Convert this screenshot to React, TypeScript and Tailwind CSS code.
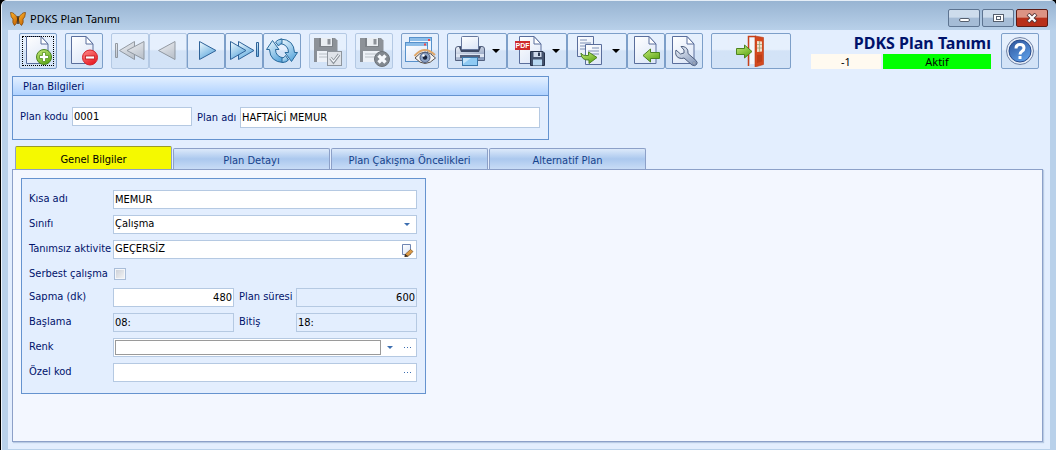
import { useState } from 'react'
import type { ComponentProps, ReactNode } from 'react'
import clsx from 'clsx'

const TABS = ['Genel Bilgiler', 'Plan Detayı', 'Plan Çakışma Öncelikleri', 'Alternatif Plan']

function Svg({ children }: { children: ReactNode }) {
  return (
    <svg viewBox="0 0 32 32" className="h-8 w-8 shrink-0" aria-hidden="true">
      {children}
    </svg>
  )
}

// Shared gradients, referenced by id from all icons
function Gradients() {
  const list = [
    ['gBlue', '#f2fbff', '#5fa9dd'],
    ['gGray', '#f0f1f3', '#b9bdc3'],
    ['gPaper', '#ffffff', '#dfe8f8'],
    ['gGreen', '#c9ec7c', '#5fa818'],
    ['gRed', '#ff8d8d', '#e81c24'],
    ['gHelp', '#2c5298', '#5b9be4'],
    ['gSteel', '#f2f6fc', '#8b9dbd'],
    ['gOrange', '#ffb52b', '#c96a08'],
  ]
  return (
    <svg className="absolute h-0 w-0" aria-hidden="true">
      <defs>
        {list.map(([id, from, to]) => (
          <linearGradient key={id} id={id} x1="0" y1="0" x2="0.6" y2="1">
            <stop offset="0" stopColor={from} />
            <stop offset="1" stopColor={to} />
          </linearGradient>
        ))}
      </defs>
    </svg>
  )
}

function Page({ x = 4 }: { x?: number }) {
  return (
    <g transform={`translate(${x} 1)`} stroke="#5a6e9c" strokeLinejoin="round">
      <path d="M.5 .5H15L22 8V27.5H.5Z" fill="url(#gPaper)" />
      <path d="M15 .5V8H22Z" fill="#fff" />
    </g>
  )
}

function Floppy({ body, shade }: { body: string; shade: string }) {
  return (
    <g>
      <path d="M2 3H23L25.500 5.500V27H2Z" fill={body} />
      <path d="M7 3H21V12H7Z" fill={shade} />
      <path d="M9 3H20V11H9Z" fill="#eceef0" />
      <path d="M15.500 4H18.500V9.500H15.500Z" fill={body} />
      <path d="M5 16H22V27H5Z" fill="#f4f5f7" />
      <path d="M7 19H20M7 22H20" stroke="#b4b8bd" />
    </g>
  )
}

const NewIcon = () => (
  <Svg>
    <Page />
    <circle cx="22" cy="22" r="7.500" fill="url(#gGreen)" stroke="#4c8420" />
    <path d="M20.500 17.500h3v3h3v3h-3v3h-3v-3h-3v-3h3z" fill="#fff" stroke="#55901f" strokeWidth=".8" />
  </Svg>
)

const DeleteIcon = () => (
  <Svg>
    <Page x={3} />
    <circle cx="22" cy="22.500" r="7.500" fill="url(#gRed)" stroke="#d3222a" />
    <rect x="17.500" y="21" width="9" height="3" fill="#fff" stroke="#b8181e" strokeWidth=".8" />
  </Svg>
)

const FirstIcon = () => (
  <Svg>
    <g fill="url(#gGray)" stroke="#7f858c" strokeLinejoin="round">
      <rect x="1.500" y="8.500" width="2" height="14" />
      <path d="M20.500 6.500V24.500L5.500 15.500Z" />
      <path d="M30 6.500V24.500L13 15.500Z" />
    </g>
  </Svg>
)

const PrevIcon = () => (
  <Svg>
    <path d="M23 6.500V24.500L6.500 15.500Z" fill="url(#gGray)" stroke="#7f858c" strokeLinejoin="round" />
  </Svg>
)

const NextIcon = () => (
  <Svg>
    <path d="M9.500 6.500V24.500L26 15.500Z" fill="url(#gBlue)" stroke="#2f6399" strokeLinejoin="round" />
  </Svg>
)

const LastIcon = () => (
  <Svg>
    <g fill="url(#gBlue)" stroke="#2f6399" strokeLinejoin="round">
      <path d="M10.500 6.500V24.500L26 15.500Z" />
      <path d="M2.500 6.500V24.500L18 15.500Z" />
      <rect x="28.500" y="7.500" width="2" height="14" />
    </g>
  </Svg>
)

// Two half-ring arrows: the left one points up, the right one down
const RefreshIcon = () => (
  <Svg>
    <g fill="url(#gBlue)" stroke="#2a6a9c" strokeLinejoin="round">
      <path d="M6.500 5.500L13 14.500H9.500Q9.500 21.500 17.500 23V27.500Q4 27 3.500 14.500H.5Z" />
      <path d="M25.500 26.500L19 17.500H22.500Q22.500 10 14.500 8.500V4Q28 4.500 28.500 17.500H31.500Z" />
      <path d="M9.500 7Q11.500 4.500 16 4V8.500Q13.500 9 12.500 11Z" />
      <path d="M22.500 25Q20.500 27.500 16 27.500V23Q18.500 23 19.500 20.500Z" />
    </g>
  </Svg>
)

const SaveIcon = () => (
  <Svg>
    <Floppy body="#777b80" shade="#62666a" />
    <rect x="15.500" y="16.500" width="14" height="14" fill="#e2e4e6" stroke="#7d8287" />
    <path d="M18.500 23L21.500 27L27 19.500" fill="none" stroke="#7c8085" strokeWidth="3" />
    <path d="M18.500 23L21.500 26.500L27 19.500" fill="none" stroke="#fff" strokeWidth="1.200" />
  </Svg>
)

const CancelIcon = () => (
  <Svg>
    <Floppy body="#777b80" shade="#62666a" />
    <circle cx="24" cy="24" r="7.500" fill="#6f7377" stroke="#54585c" />
    <path d="M20.500 20.500L27.500 27.500M27.500 20.500L20.500 27.500" stroke="#fff" strokeWidth="3.400" />
  </Svg>
)

const PreviewIcon = () => (
  <Svg>
    <rect x="5.500" y="2.500" width="22" height="18" fill="#edf5ff" stroke="#5791cb" />
    <path d="M6 3H27V6H6Z" fill="#8dbde8" />
    <rect x="24" y="4" width="2" height="2" fill="#f0484a" />
    <rect x="1.500" y="7.500" width="22" height="19" fill="url(#gPaper)" stroke="#5791cb" />
    <path d="M2 8H23V11H2Z" fill="#8dbde8" />
    <rect x="20" y="8.500" width="2" height="2" fill="#f0484a" />
    <path d="M11 23Q21 11 31.500 23Q21 34 11 23Z" fill="#f4f4f4" stroke="#57504c" />
    <path d="M10.500 21Q20 9.500 31 20" fill="none" stroke="#dfa668" strokeWidth="2" />
    <circle cx="21" cy="22.500" r="5" fill="#8ea4c6" stroke="#4a5b80" />
    <circle cx="21" cy="22.500" r="2.200" fill="#18233c" />
    <circle cx="19.500" cy="20.500" r="1.200" fill="#fff" />
  </Svg>
)

const PrintIcon = () => (
  <Svg>
    <path d="M1.500 14Q1.500 11.500 4 11.500H28Q30.500 11.500 30.500 14V25.500H1.500Z" fill="url(#gSteel)" stroke="#53617f" />
    <path d="M5 12H27L25 17H7Z" fill="#3e4a66" />
    <rect x="7.500" y="1.500" width="17" height="13" rx="1" fill="url(#gPaper)" stroke="#66779d" />
    <path d="M2 19H30V22H2Z" fill="#dde5f2" />
    <rect x="6" y="20" width="20" height="3" fill="#56627d" />
    <rect x="8.500" y="22.500" width="15" height="8" fill="#8fcaf3" stroke="#3b78ab" />
    <path d="M9 23H17L9 29Z" fill="#c5e5fb" />
  </Svg>
)

const PdfIcon = () => (
  <Svg>
    <Page x={5} />
    <rect x="1" y="6" width="15" height="9" fill="#cf2a2c" />
    <text x="8.500" y="13.200" textAnchor="middle" fontSize="7" fontWeight="700" fill="#fff" fontFamily="Liberation Sans, sans-serif">
      PDF
    </text>
    <path d="M16.500 16.500H29L30.500 18V30.500H16.500Z" fill="#44536e" stroke="#26324a" />
    <rect x="19.500" y="17" width="8" height="5" fill="#cfdaea" />
    <rect x="24" y="17.500" width="2" height="3.500" fill="#2e3b54" />
    <rect x="19" y="24.500" width="9" height="6" fill="#b8d9f2" />
  </Svg>
)

const TransferIcon = () => (
  <Svg>
    <g fill="url(#gPaper)" stroke="#5a6e9c">
      <path d="M3.500 1.500H19.500V21.500H3.500Z" />
      <path d="M6 5H13M6 8H17M6 11H17M6 14H17" stroke="#7f90b4" />
      <path d="M11.500 9.500H27.500V29.500H11.500Z" />
      <path d="M18 13H25M14 16H25M14 19H25" stroke="#7f90b4" />
    </g>
    <path
      d="M7 18Q8 21 14.500 20.500V17L23 22.500L15 28.500V25Q7 25.500 7 18Z"
      fill="url(#gGreen)"
      stroke="#4c8420"
      strokeLinejoin="round"
    />
  </Svg>
)

const ImportIcon = () => (
  <Svg>
    <Page />
    <path d="M13 20.500L20.500 14V17.500H29.500V23.500H20.500V27Z" fill="url(#gGreen)" stroke="#4c8420" strokeLinejoin="round" />
  </Svg>
)

const SettingsIcon = () => (
  <Svg>
    <Page />
    <path
      d="M8 15Q6.500 21 11 23Q14 24 16 23L24 30Q27 31.500 28.500 29.500Q30 27.500 28 25.500L20 18.500Q20.500 12.500 15 11.500L13 11.500L16 15V18L12.500 19Z"
      fill="url(#gSteel)"
      stroke="#4f5f7e"
      strokeLinejoin="round"
    />
    <circle cx="26" cy="28" r="1" fill="#fff" stroke="#4f5f7e" strokeWidth=".6" />
  </Svg>
)

const ExitIcon = () => (
  <Svg>
    <path d="M13.500 31V1.500H21" fill="none" stroke="#c8401a" strokeWidth="1.500" />
    <path d="M15 3H21V29H15Z" fill="#f3f7fc" />
    <path d="M20 1L28.500 2.500V29.500L20 32Z" fill="#d4491f" stroke="#b93a15" strokeWidth=".6" />
    <path d="M22 6L27 6.500V16.500L22 17Z" fill="#f3ddc9" />
    <path d="M24.500 6V17M22 9.500H27M22 13H27" stroke="#9aa578" strokeWidth=".8" />
    <path d="M22 20L27 19.500V26.500L22 28Z" fill="#bf3e18" />
    <path d="M1.500 13.500H9.500V10L17 16.500L9.500 23V19.500H1.500Z" fill="url(#gGreen)" stroke="#4c8420" strokeLinejoin="round" />
  </Svg>
)

const HelpIcon = () => (
  <Svg>
    <circle cx="16" cy="16" r="13.500" fill="#e6edf7" stroke="#7083a6" />
    <circle cx="16" cy="16" r="11" fill="url(#gHelp)" stroke="#274a8c" />
    <path d="M12 13.500Q12 9.500 16 9.500T20 13Q20 15 18 16.200T16 19.500" fill="none" stroke="#fff" strokeWidth="3" />
    <rect x="14.500" y="21" width="3" height="3" fill="#fff" />
  </Svg>
)

const Butterfly = () => (
  <svg viewBox="0 0 16 16" className="mt-1.5 h-4 w-4" aria-hidden="true">
    <g fill="url(#gOrange)" stroke="#7c4307" strokeWidth=".7">
      <path d="M7.500 7Q4 1 .5 1.500Q.8 7 3 8Q2 12 4.500 14.500Q7 13 7.500 9Z" />
      <path d="M8.500 7Q12 1 15.500 1.500Q15.200 7 13 8Q14 12 11.500 14.500Q9 13 8.500 9Z" />
    </g>
    <path d="M8 5V13" stroke="#3c2408" strokeWidth="1.400" />
  </svg>
)

const Caret = ({ className }: { className?: string }) => (
  <svg viewBox="0 0 8 4" className={clsx('shrink-0', className)} aria-hidden="true">
    <path d="M0 0H8L4 4Z" fill="currentColor" />
  </svg>
)

interface ToolButtonProps {
  label: string
  icon: ReactNode
  menu?: boolean
  wide?: boolean
  focused?: boolean
  disabled?: boolean
}

function ToolButton({ label, icon, menu, wide, focused, disabled }: ToolButtonProps) {
  return (
    <button
      type="button"
      aria-label={label}
      disabled={disabled}
      className={clsx(
        'relative flex h-9 shrink-0 items-center rounded-xs border bg-linear-to-b from-[#e6f0fd] from-45% to-[#d3e3f7] to-50%',
        menu ? 'w-15 justify-between pr-1.5 pl-1.5' : 'justify-center',
        !menu && (wide ? 'w-20' : 'w-9.5'),
        disabled ? 'border-[#b4c9e4] text-gray-400' : 'border-[#7d9fc9] text-black',
      )}
    >
      <span className={clsx('flex', disabled && 'opacity-80')}>{icon}</span>
      {menu && <Caret className="h-1 w-2" />}
      {focused && <span className="absolute inset-0.5 border border-dotted border-black" />}
    </button>
  )
}

function Toolbar() {
  return (
    <div className="flex h-11.5 items-start gap-2 pt-0.75 pr-2.75 pl-2.75">
      <ToolButton label="Yeni" icon={<NewIcon />} focused />
      <ToolButton label="Sil" icon={<DeleteIcon />} />
      <div className="flex">
        <ToolButton label="İlk" icon={<FirstIcon />} disabled />
        <ToolButton label="Önceki" icon={<PrevIcon />} disabled />
        <ToolButton label="Sonraki" icon={<NextIcon />} />
        <ToolButton label="Son" icon={<LastIcon />} />
        <ToolButton label="Yenile" icon={<RefreshIcon />} />
      </div>
      <ToolButton label="Kaydet" icon={<SaveIcon />} disabled />
      <ToolButton label="Vazgeç" icon={<CancelIcon />} disabled />
      <ToolButton label="Önizleme" icon={<PreviewIcon />} />
      <div className="flex">
        <ToolButton label="Yazdır" icon={<PrintIcon />} menu />
        <ToolButton label="PDF kaydet" icon={<PdfIcon />} menu />
        <ToolButton label="Aktar" icon={<TransferIcon />} menu />
        <ToolButton label="İçe al" icon={<ImportIcon />} />
        <ToolButton label="Ayarlar" icon={<SettingsIcon />} />
      </div>
      <ToolButton label="Çıkış" icon={<ExitIcon />} wide />
      <div className="ml-auto flex items-start gap-2.5">
        <div className="w-45 font-['Noto_Sans',sans-serif]">
          <h1 className="text-right text-base leading-5 font-bold whitespace-nowrap text-[#00126b]">PDKS Plan Tanımı</h1>
          <div className="mt-px flex gap-0.5 text-center text-[11px] leading-[15px] text-black">
            <span className="w-17.5 bg-[#fffaf0]">-1</span>
            <span className="flex-1 bg-[#00ff00]">Aktif</span>
          </div>
        </div>
        <ToolButton label="Yardım" icon={<HelpIcon />} />
      </div>
    </div>
  )
}

function TitleBar() {
  const base = 'flex h-4.5 w-8 items-center justify-center rounded-xs border'
  const plain = 'border-[#5d7491] bg-linear-to-b from-[#cddcec] from-45% to-[#a5bcd6] to-50%'
  return (
    <header className="flex h-7.5 items-center border-t border-[#e6eef7] bg-linear-to-b from-[#98b4d2] to-[#b8d0e9] pr-2 pl-2">
      <Butterfly />
      <span className="ml-1 pt-1.5 font-['Noto_Sans',sans-serif] text-[11px] leading-6 text-black">PDKS Plan Tanımı</span>
      <div className="ml-auto flex gap-0.5 pt-1">
        <button type="button" aria-label="Simge durumuna küçült" className={clsx(base, plain)}>
          <span className="mt-1 h-1 w-2.75 rounded-xs border border-[#555f6e] bg-white" />
        </button>
        <button type="button" aria-label="Ekranı kapla" className={clsx(base, plain)}>
          <span className="flex h-2 w-2.75 items-center justify-center border border-[#555f6e] bg-white">
            <span className="h-1 w-1.25 border border-[#555f6e]" />
          </span>
        </button>
        <button
          type="button"
          aria-label="Kapat"
          className={clsx(base, 'border-[#5c1c16] bg-linear-to-b from-[#dc9384] from-45% to-[#b8301a] to-50%')}
        >
          <svg viewBox="0 0 12 10" className="h-2.5 w-3" aria-hidden="true">
            <path d="M2 1L10 9M10 1L2 9" stroke="#5b3a3c" strokeWidth="4" />
            <path d="M2.500 1.500L9.500 8.500M9.500 1.500L2.500 8.500" stroke="#fff" strokeWidth="2.200" />
          </svg>
        </button>
      </div>
    </header>
  )
}

function Field({ className, ...props }: ComponentProps<'input'>) {
  return (
    <input
      type="text"
      className={clsx(
        'h-4.75 min-w-0 border border-[#b5c9e2] px-px text-black outline-none',
        props.readOnly ? 'bg-[#e3eefe]' : 'bg-white',
        className,
      )}
      {...props}
    />
  )
}

const wrapper = 'col-span-3 flex h-4.75 items-center border border-[#b5c9e2] bg-white'

function Dots({ label }: { label: string }) {
  return (
    <button type="button" aria-label={label} className="flex w-4 items-center justify-center gap-0.5">
      <span className="h-px w-px bg-[#3c6eb0]" />
      <span className="h-px w-px bg-[#3c6eb0]" />
      <span className="h-px w-px bg-[#3c6eb0]" />
    </button>
  )
}

function GeneralForm() {
  return (
    <form className="w-101.25 border border-[#6593cf] bg-[#e3eefe] pt-2.75 pr-2 pb-2.75 pl-1.75">
      <div className="grid grid-cols-[84px_1fr_62px_1fr] items-center gap-y-1.5">
        <label htmlFor="kisa">Kısa adı</label>
        <Field id="kisa" defaultValue="MEMUR" className="col-span-3" />

        <label htmlFor="sinif">Sınıfı</label>
        <div className={clsx(wrapper, 'relative')}>
          <select id="sinif" className="h-full w-full appearance-none bg-transparent px-px text-black outline-none">
            <option>Çalışma</option>
          </select>
          <Caret className="pointer-events-none absolute right-1.5 h-0.75 w-1.5 text-[#3c6eb0]" />
        </div>

        <label htmlFor="aktivite" className="whitespace-nowrap">Tanımsız aktivite</label>
        <div className={wrapper}>
          <input id="aktivite" type="text" defaultValue="GEÇERSİZ" className="min-w-0 flex-1 px-px text-black outline-none" />
          <button type="button" aria-label="Aktivite düzenle" className="mr-0.5">
            <svg viewBox="0 0 14 14" className="h-3.5 w-3.5" aria-hidden="true">
              <path d="M2.500 1.500H10.500V11.500H2.500Z" fill="url(#gPaper)" stroke="#6f86b3" />
              <path d="M5.500 11L10.500 6.500L13 8.500L8.500 13L5 13.500Z" fill="#dc9a45" stroke="#7d5424" strokeWidth=".7" />
              <path d="M5 11L8.500 13.500L4.500 14Z" fill="#3c2c1e" />
            </svg>
          </button>
        </div>

        <label htmlFor="serbest" className="h-4.25 leading-[17px] whitespace-nowrap">Serbest çalışma</label>
        <input
          id="serbest"
          type="checkbox"
          className="col-span-3 ml-px h-3 w-3 appearance-none border border-[#a9bdd8] bg-linear-to-br from-[#c9ced6] to-[#f6f6f6] shadow-[inset_0_0_0_1px_#f4f6f9]"
        />

        <label htmlFor="sapma">Sapma (dk)</label>
        <Field id="sapma" defaultValue="480" className="text-right" />
        <label htmlFor="sure" className="pl-1.25 whitespace-nowrap">Plan süresi</label>
        <Field id="sure" defaultValue="600" readOnly className="text-right" />

        <label htmlFor="baslama">Başlama</label>
        <Field id="baslama" defaultValue="08:" readOnly />
        <label htmlFor="bitis" className="pl-1.25">Bitiş</label>
        <Field id="bitis" defaultValue="18:" readOnly />

        <label htmlFor="renk">Renk</label>
        <div className={clsx(wrapper, 'pr-px pl-px')}>
          <input id="renk" type="text" className="h-3.75 min-w-0 flex-1 border border-[#9a9a9a] outline-none" />
          <button type="button" aria-label="Renk listesi" className="flex w-4.5 justify-center text-[#3c6eb0]">
            <Caret className="h-0.75 w-1.5" />
          </button>
          <Dots label="Renk seç" />
        </div>

        <label htmlFor="ozel">Özel kod</label>
        <div className={clsx(wrapper, 'pr-px')}>
          <input id="ozel" type="text" className="min-w-0 flex-1 px-px text-black outline-none" />
          <Dots label="Özel kod seç" />
        </div>
      </div>
    </form>
  )
}

export default function App() {
  const [active, setActive] = useState(0)

  return (
    <div className="flex min-h-screen flex-col bg-black pl-px font-['DejaVu_Sans_Condensed','DejaVu_Sans',sans-serif] text-[11px] text-[#00126b]">
      <Gradients />
      <div className="flex flex-1 flex-col overflow-hidden rounded-t-md border-l border-[#eef4fb] bg-[#b9d1ea]">
        <TitleBar />
        <main className="mr-1.5 mb-px ml-1.5 flex flex-1 flex-col bg-[#e3eefe]">
          <Toolbar />

          <section className="ml-1 w-134.25 border border-[#6593cf]">
            <h2 className="h-4.75 border-b border-[#6593cf] bg-linear-to-b from-[#e3efff] to-[#afd2ff] pl-2.5 leading-[19px]">
              Plan Bilgileri
            </h2>
            <div className="flex items-start pt-2.75 pr-2 pb-2.75 pl-1.75">
              <label htmlFor="kod" className="w-13 shrink-0 leading-[19px] whitespace-nowrap">Plan kodu</label>
              <Field id="kod" defaultValue="0001" className="w-30" />
              <label htmlFor="ad" className="w-12 shrink-0 pl-1.25 leading-[21px] whitespace-nowrap">Plan adı</label>
              <input
                id="ad"
                type="text"
                defaultValue="HAFTAİÇİ MEMUR"
                className="h-5.25 min-w-0 flex-1 border border-[#b5c9e2] bg-white px-px text-black outline-none"
              />
            </div>
          </section>

          <div role="tablist" className="mt-1.5 ml-1.75 flex items-end gap-px">
            {TABS.map((tab, i) => (
              <button
                key={tab}
                type="button"
                role="tab"
                aria-selected={i === active}
                onClick={() => setActive(i)}
                className={clsx(
                  'w-39.25 rounded-t-xs border border-b-0 pt-1',
                  i === active
                    ? 'h-5.75 border-[#8ca0c8] border-t-[#9a9a28] bg-[#f5f900] text-black'
                    : 'h-5.25 border-[#8ca0c8] bg-linear-to-b from-[#dce9fa] from-0% via-[#abc8ee] via-50% to-[#c8dcf6] text-[#15428b]',
                )}
              >
                {tab}
              </button>
            ))}
          </div>
          <div
            role="tabpanel"
            className="mr-1.75 mb-1.75 ml-1 flex-1 border border-[#8ca0c8] bg-[#f3f7ff] p-2 shadow-[1px_1px_1px_#b9cbe4]"
          >
            <GeneralForm />
          </div>
        </main>
      </div>
    </div>
  )
}
